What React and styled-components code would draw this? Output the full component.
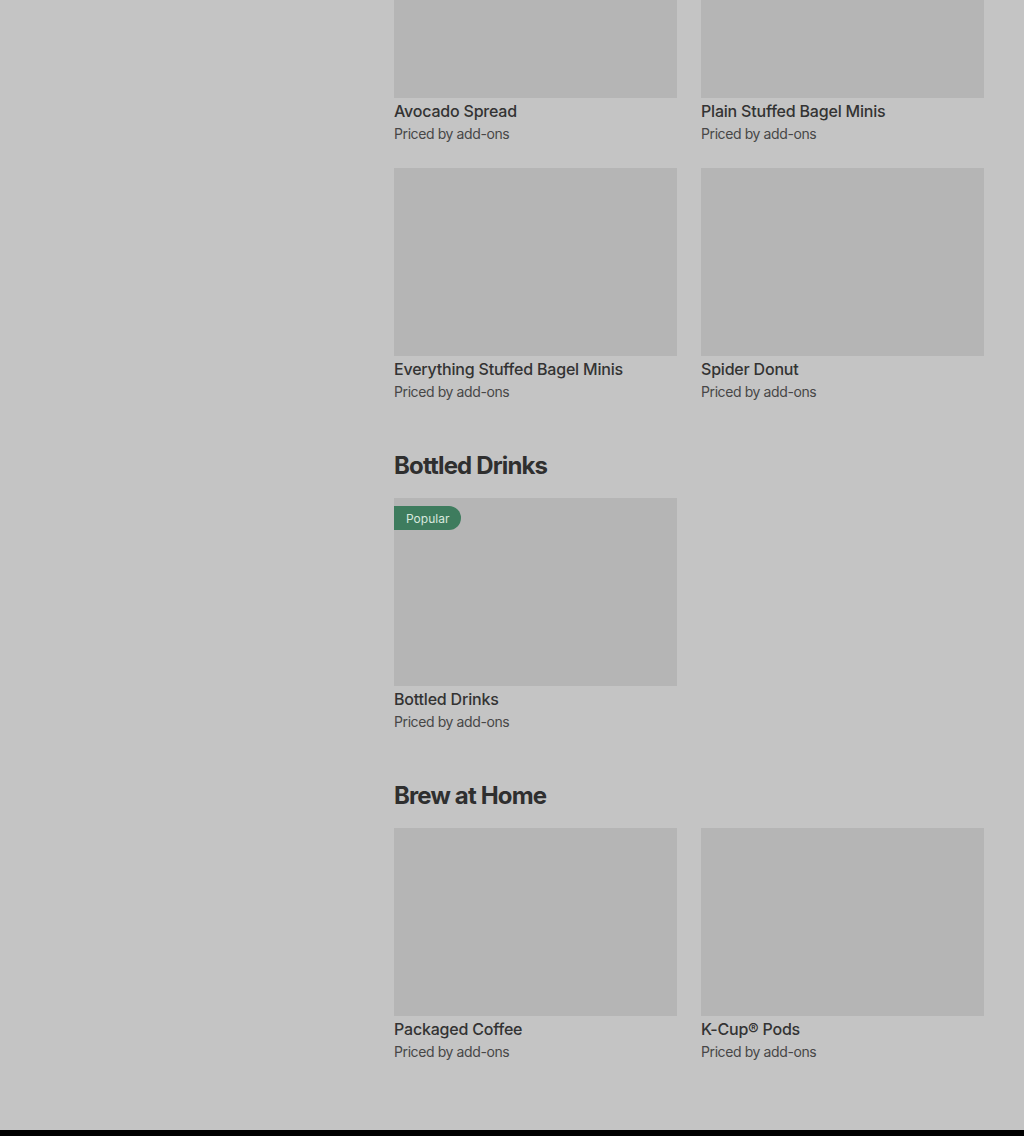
import styled, { createGlobalStyle } from 'styled-components';

const GlobalStyle = createGlobalStyle`
  html, body {
    margin: 0;
    padding: 0;
    background: #c4c4c4;
    font-family: Inter, "Liberation Sans", sans-serif;
    overflow: hidden;
  }
`;

const sections = [
  {
    title: null,
    items: [
      { name: 'Avocado Spread' },
      { name: 'Plain Stuffed Bagel Minis' },
      { name: 'Everything Stuffed Bagel Minis' },
      { name: 'Spider Donut' }
    ]
  },
  {
    title: 'Bottled Drinks',
    items: [{ name: 'Bottled Drinks', popular: true }]
  },
  {
    title: 'Brew at Home',
    items: [{ name: 'Packaged Coffee' }, { name: 'K-Cup® Pods' }]
  }
];

function ItemCard({ name, popular }) {
  return (
    <Card>
      <Thumb>{popular && <Badge>Popular</Badge>}</Thumb>
      <Name>{name}</Name>
      <Price>Priced by add-ons</Price>
    </Card>
  );
}

export default function App() {
  return (
    <>
      <GlobalStyle />
      <Page>
        <Layout>
          <Sidebar />
          <Menu>
            {sections.map((section, i) => (
              <Section key={i}>
                {section.title && <Heading>{section.title}</Heading>}
                <Grid>
                  {section.items.map((item) => (
                    <ItemCard key={item.name} {...item} />
                  ))}
                </Grid>
              </Section>
            ))}
          </Menu>
        </Layout>
        <Footer />
      </Page>
    </>
  );
}

const Page = styled.div`
  height: 1136px;
  display: flex;
  flex-direction: column;
  overflow: hidden;
`;

const Layout = styled.div`
  flex: 1;
  display: grid;
  grid-template-columns: 394px 590px;
  margin-top: -90px;
`;

const Sidebar = styled.aside``;

const Menu = styled.main`
  display: flex;
  flex-direction: column;
  gap: 47px;
`;

const Section = styled.section`
  display: flex;
  flex-direction: column;
  gap: 16px;
`;

const Heading = styled.h2`
  margin: 0;
  font-size: 24px;
  line-height: 32px;
  font-weight: 700;
  color: #2f2f2f;
  letter-spacing: -0.85px;
`;

const Grid = styled.div`
  display: grid;
  grid-template-columns: repeat(2, 283px);
  column-gap: 24px;
  row-gap: 23px;
`;

const Card = styled.div`
  display: flex;
  flex-direction: column;
`;

const Thumb = styled.div`
  position: relative;
  height: 188px;
  background: #b5b5b5;
`;

const Badge = styled.span`
  position: absolute;
  top: 8px;
  left: 0;
  height: 24px;
  padding: 0 12px;
  display: flex;
  align-items: center;
  background: #3e7c5e;
  color: #d9e8de;
  font-size: 12px;
  border-radius: 0 12px 12px 0;
`;

const Name = styled.div`
  margin-top: 2px;
  font-size: 16px;
  line-height: 22px;
  font-weight: 500;
  color: #333333;
  letter-spacing: -0.2px;
`;

const Price = styled.div`
  margin-top: 1px;
  font-size: 14px;
  line-height: 22px;
  color: #474747;
  letter-spacing: -0.4px;
`;

const Footer = styled.footer`
  height: 6px;
  background: #000;
`;
